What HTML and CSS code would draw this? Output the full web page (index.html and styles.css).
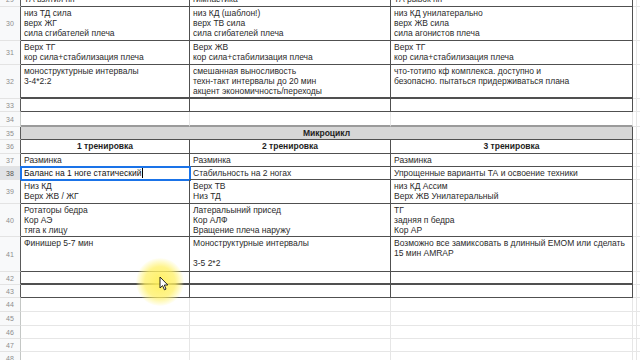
FILE: index.html
```html
<!DOCTYPE html>
<html lang="ru">
<head>
<meta charset="utf-8">
<title>Микроцикл</title>
<link rel="stylesheet" href="styles.css">
</head>
<body>
<div class="sheet">
  <div class="row t h14">
    <div class="rh">29</div><div class="c">ТА взятия пп</div><div class="c">гимнастика</div><div class="c">ТА рывок пп</div><div class="s"></div><div class="s e"></div>
  </div>
  <div class="row t h34">
    <div class="rh">30</div>
    <div class="c">низ ТД сила<br>верх ЖГ<br>сила сгибателей плеча</div>
    <div class="c">низ КД (шаблон!)<br>верх ТВ сила<br>сила сгибателей плеча</div>
    <div class="c">низ КД унилатерально<br>верх ЖВ сила<br>сила агонистов плеча</div>
    <div class="s"></div><div class="s e"></div>
  </div>
  <div class="row t h24">
    <div class="rh">31</div>
    <div class="c">Верх ТГ<br>кор сила+стабилизация плеча</div>
    <div class="c">Верх ЖВ<br>кор сила+стабилизация плеча</div>
    <div class="c">Верх ТГ<br>кор сила+стабилизация плеча</div>
    <div class="s"></div><div class="s e"></div>
  </div>
  <div class="row t thick h34">
    <div class="rh">32</div>
    <div class="c">моноструктурные интервалы<br>3-4*2:2</div>
    <div class="c">смешанная выносливость<br>техн-такт интервалы до 20 мин<br>акцент экономичность/переходы</div>
    <div class="c">что-тотипо кф комплекса. доступно и<br>безопасно. пытаться придерживаться плана</div>
    <div class="s"></div><div class="s e"></div>
  </div>
  <div class="row t h13">
    <div class="rh">33</div><div class="c"></div><div class="c"></div><div class="c"></div><div class="s"></div><div class="s e"></div>
  </div>
  <div class="row gap h15">
    <div class="rh">34</div><div class="c"></div><div class="c"></div><div class="c"></div><div class="s"></div><div class="s e"></div>
  </div>
  <div class="row t h13">
    <div class="rh">35</div><div class="c head span3">Микроцикл</div><div class="s"></div><div class="s e"></div>
  </div>
  <div class="row t h14">
    <div class="rh">36</div><div class="c bold">1 тренировка</div><div class="c bold">2 тренировка</div><div class="c bold">3 тренировка</div><div class="s"></div><div class="s e"></div>
  </div>
  <div class="row t h13">
    <div class="rh">37</div><div class="c">Разминка</div><div class="c">Разминка</div><div class="c">Разминка</div><div class="s"></div><div class="s e"></div>
  </div>
  <div class="row t h13">
    <div class="rh active">38</div>
    <div class="c sel">Баланс на 1 ноге статический<span class="caret"></span></div>
    <div class="c">Стабильность на 2 ногах</div>
    <div class="c">Упрощенные варианты ТА и освоение техники</div>
    <div class="s"></div><div class="s e"></div>
  </div>
  <div class="row t h24">
    <div class="rh">39</div>
    <div class="c">Низ КД<br>Верх ЖВ / ЖГ</div>
    <div class="c">Верх ТВ<br>Низ ТД</div>
    <div class="c">низ КД Ассим<br>Верх ЖВ Унилатеральный</div>
    <div class="s"></div><div class="s e"></div>
  </div>
  <div class="row t h33">
    <div class="rh">40</div>
    <div class="c">Ротаторы бедра<br>Кор АЭ<br>тяга к лицу</div>
    <div class="c">Латеральыний присед<br>Кор АЛФ<br>Вращение плеча наружу</div>
    <div class="c">ТГ<br>задняя п бедра<br>Кор АР</div>
    <div class="s"></div><div class="s e"></div>
  </div>
  <div class="row t h35">
    <div class="rh">41</div>
    <div class="c">Финишер 5-7 мин</div>
    <div class="c">Моноструктурные интервалы<br><br>3-5 2*2</div>
    <div class="c">Возможно все замиксовать в длинный EMOM или сделать<br>15 мин AMRAP</div>
    <div class="s"></div><div class="s e"></div>
  </div>
  <div class="row t thick h13">
    <div class="rh">42</div><div class="c"></div><div class="c"></div><div class="c"></div><div class="s"></div><div class="s e"></div>
  </div>
  <div class="row t h13">
    <div class="rh">43</div><div class="c"></div><div class="c"></div><div class="c"></div><div class="s"></div><div class="s e"></div>
  </div>
  <div class="row h14">
    <div class="rh">44</div><div class="c"></div><div class="c"></div><div class="c"></div><div class="s"></div><div class="s e"></div>
  </div>
  <div class="row h14">
    <div class="rh">45</div><div class="c"></div><div class="c"></div><div class="c"></div><div class="s"></div><div class="s e"></div>
  </div>
  <div class="row h13">
    <div class="rh">46</div><div class="c"></div><div class="c"></div><div class="c"></div><div class="s"></div><div class="s e"></div>
  </div>
  <div class="row h13">
    <div class="rh">47</div><div class="c"></div><div class="c"></div><div class="c"></div><div class="s"></div><div class="s e"></div>
  </div>
  <div class="row h14">
    <div class="rh">48</div><div class="c"></div><div class="c"></div><div class="c"></div><div class="s"></div><div class="s e"></div>
  </div>
</div>
<div class="highlight"></div>
<svg class="pointer" width="10" height="15" viewBox="0 0 10 15" aria-hidden="true">
  <path d="M1 1 L1 12 L3.6 9.6 L5.4 13.8 L7 13.1 L5.3 9 L8.8 9 Z" fill="#fff" stroke="#111" stroke-width="0.9" stroke-linejoin="round"/>
</svg>
</body>
</html>
```

FILE: styles.css
```css
html, body {
  margin: 0;
  padding: 0;
  background: #fff;
  overflow: hidden;
  width: 640px;
  height: 360px;
}

.sheet {
  margin-top: -7px;
  font-family: "Liberation Sans", Arial, sans-serif;
}

.row {
  display: grid;
  grid-template-columns: 21px 169px 201px 242px 4px 1fr;
}

.h13 { height: 13px; }
.h14 { height: 14px; }
.h15 { height: 15px; }
.h24 { height: 24px; }
.h33 { height: 33px; }
.h34 { height: 34px; }
.h35 { height: 35px; }

.rh {
  box-sizing: border-box;
  background: #f8f9fa;
  border-right: 1px solid #c4c7c5;
  border-bottom: 1px solid #e3e3e3;
  color: #8d8d8d;
  font-size: 7px;
  display: flex;
  align-items: center;
  justify-content: center;
}

.rh.active {
  background: #e1e3e6;
  color: #555;
}

.c, .s {
  box-sizing: border-box;
  border-right: 1px solid #e6e6e6;
  border-bottom: 1px solid #e6e6e6;
  min-width: 0;
}

.c {
  padding: 1px 3px 0;
  font-size: 8.5px;
  line-height: 10px;
  color: #2a2a2a;
  white-space: nowrap;
  overflow: hidden;
}

.e { border-right: none; }

.t .rh { border-right-color: #5a5a5a; }
.t .c {
  border-right-color: #505050;
  border-bottom-color: #505050;
}

.thick .c { border-bottom-width: 2px; }

.gap .c {
  border-bottom: 2px solid #9a9a9a;
}

.span3 { grid-column: span 3; }

.head {
  background: #d6d6d6;
  font-weight: bold;
  text-align: center;
  color: #1e1e1e;
}

.bold {
  font-weight: bold;
  text-align: center;
  color: #1e1e1e;
}

.sel {
  outline: 2px solid #1a73e8;
  outline-offset: -1px;
  color: #111;
  overflow: visible;
}

.caret {
  display: inline-block;
  width: 0;
  height: 10px;
  border-left: 1px solid #000;
  vertical-align: top;
  margin-left: 1px;
}

.highlight {
  position: absolute;
  left: 136px;
  top: 258px;
  width: 48px;
  height: 48px;
  border-radius: 50%;
  background: radial-gradient(circle, rgba(255, 240, 90, 0.95) 0%, rgba(255, 240, 100, 0.75) 45%, rgba(255, 245, 130, 0.35) 62%, rgba(255, 250, 180, 0) 72%);
}

.pointer {
  position: absolute;
  left: 159px;
  top: 276px;
}
```
